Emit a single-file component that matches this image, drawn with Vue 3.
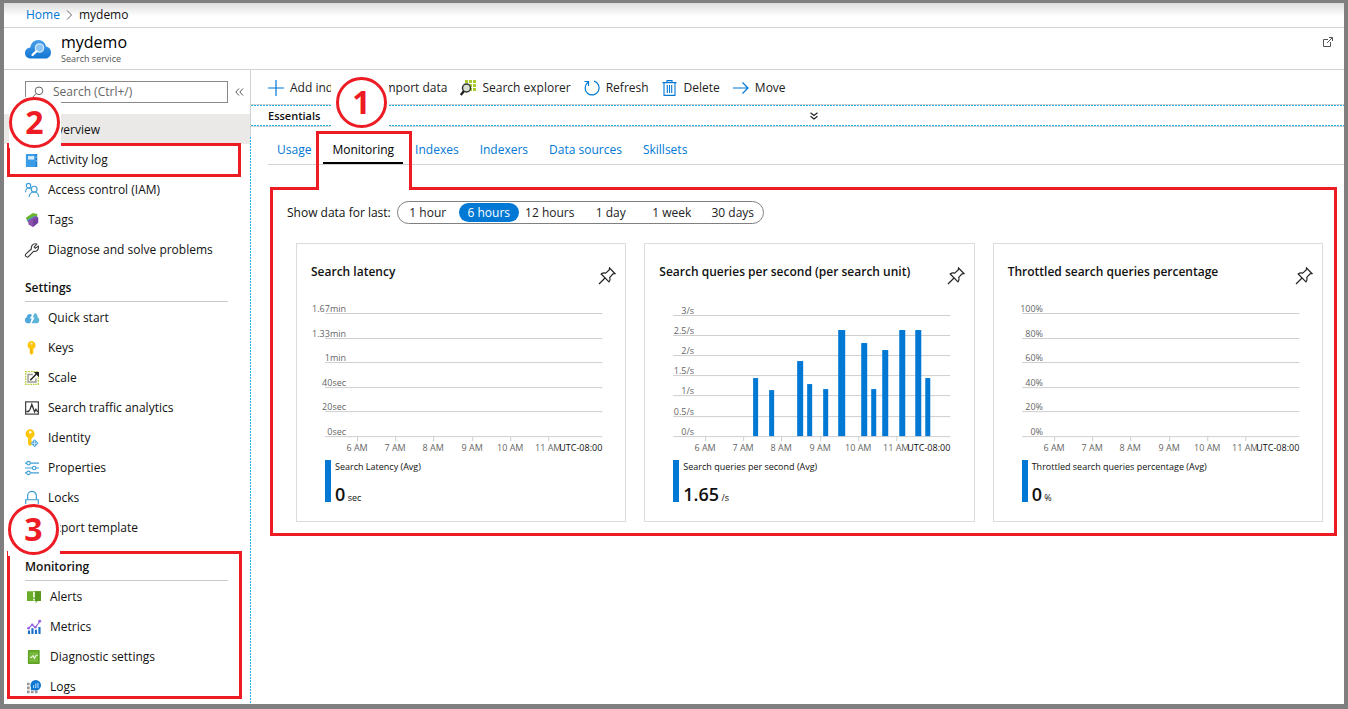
<script setup>
import { ref } from 'vue'

const icons = {
  overview: '<path d="M4 13a3.500 3.500 0 0 1 0-7 4.500 4.500 0 0 1 8.500 1A3 3 0 0 1 12 13z" fill="#2f8be0"/>',
  book: '<rect x="2" y="1" width="12" height="15" rx="1" fill="#1d7fd0"/><rect x="1" y="1" width="11" height="15" rx="1" fill="#3a9be6"/><rect x="3.500" y="3.500" width="7" height="4" fill="#d5ecfa"/><path d="M12.700 4v2M12.700 8v2" stroke="#9fd3f5"/>',
  people: '<g fill="none" stroke="#3f9fd8" stroke-width="1.300"><circle cx="4" cy="3" r="2.500"/><path d="M.6 10.500c.2-2.800 1.500-4.800 3.500-4.800 1 0 1.800.5 2.400 1.200"/><circle cx="10.500" cy="7" r="3.300"/><path d="M4.700 16c.3-3.200 2.200-5.700 5.700-5.700s5 2.700 5.300 5.700"/></g>',
  tags: '<path d="M1 5.500L9 0l5 1v3L3 10z" fill="#6bb52c"/><path d="M2 8l9-5 3 1v4l-9 4z" fill="#3ca2d9"/><path d="M3.500 8.500L12 3.500l3 1.500v6L9 16l-5-3z" fill="#8b52a8"/><path d="M9 7l6-2v6L9 16z" fill="#7440a0"/>',
  wrench: '<path d="M.8 12.800l6.500-6c-.5-3 1.200-6 4.300-6 1 0 1.500.1 2 .5L10.500 4.500l1.200 1.600 3.600-2.500c.6 4.100-2 6.600-5.500 5.900l-6 6.200c-1.800 1.100-4.300-1-3-2.900z" fill="none" stroke="#3b3b3b" stroke-width="1.300"/>',
  quick: '<path d="M3 14C-1 14-1 8 1.800 7.500 2.300 3.500 6 2.500 8 4.500L5.500 8.500h2.200L6 14z" fill="#4fa8dc"/><path d="M7.500 14L11 7.500H8.700L11 2.500c2.200 0 3.400 1.700 3.400 4.500 2.800.8 2.500 7-1 7z" fill="#5db4d9"/>',
  key: '<path d="M7.500 0a4.800 4.800 0 0 0-2 9V14L7.500 16l2-2V9a4.800 4.800 0 0 0-2-9z" fill="#fdc60b"/><circle cx="7.500" cy="2.800" r="1.200" fill="#fff3bd"/><path d="M6.800 9v5" stroke="#d99f00"/>',
  scale: '<rect x=".8" y=".8" width="14.400" height="14.400" fill="none" stroke="#b5cf38" stroke-width="1.500" stroke-dasharray="2 1"/><path d="M9 4H3.500v8.500h9V8.500" fill="none" stroke="#9a9a9a" stroke-width="1.600"/><path d="M6 10.500L13 3.500" stroke="#222" stroke-width="1.700"/><path d="M10 1h6v6z" fill="#222"/>',
  traffic: '<rect x=".7" y="1" width="14.600" height="14" fill="none" stroke="#444" stroke-width="1.400"/><path d="M1.500 12h2.500l1.800-2.500 2-5.500L11 12.500l1.500-3 2 3" fill="none" stroke="#333" stroke-width="1.500"/>',
  identity: '<path d="M6 -2a5.300 5.300 0 0 0-2.500 10V15L5.500 17l2.500-2-1-1.500 1-1.500-1-1.500 1-2.500A5.300 5.300 0 0 0 6-2z" fill="#fdc60b"/><circle cx="6" cy="1.500" r="1.400" fill="#fff"/><path d="M11 9.500l4.500 4.500L11 18.500 6.500 14z" fill="#4fa8dc"/><path d="M11 11v6M8 14h6" stroke="#d9effb"/>',
  sliders: '<g fill="none" stroke="#3f9fd8" stroke-width="1.300"><path d="M0 2.500h2M6 2.500h10M0 8h8.500M12.500 8H16M0 13.500h2M6 13.500h10"/><circle cx="4" cy="2.500" r="2"/><circle cx="10.500" cy="8" r="2"/><circle cx="4" cy="13.500" r="2"/></g>',
  lock: '<g fill="none" stroke="#3f9fd8" stroke-width="1.400"><path d="M3 10V5.500a5 5 0 0 1 10 0V10"/><path d="M.8 15.500V10h14.400v5.500"/></g>',
  template: '<rect x="2" y="2" width="12" height="12" fill="none" stroke="#3f9fd8"/>',
  alerts: '<path d="M0 1.500h16v11h-4l-2 3v-3H0z" fill="#6aad2b"/><path d="M8 1.500h8v11H9z" fill="#57961f"/><path d="M8 2v6.500M8 10v2" stroke="#fff" stroke-width="1.800"/>',
  metrics: '<path d="M1 12h2.500v4H1zM5 9.500h2.500V16H5zM9 11h2.500v5H9zM13 8h2.500v8H13z" fill="#1a73c8"/><path d="M1.500 9.500l4.500-4 3.500 3L14.500 2" fill="none" stroke="#8a5be0" stroke-width="1.200"/><g fill="#9b62e8"><circle cx="1.800" cy="9.300" r="1.500"/><circle cx="6" cy="5.500" r="1.500"/><circle cx="9.600" cy="8.300" r="1.500"/><circle cx="14.500" cy="1.500" r="1.700"/></g>',
  diagnostic: '<rect x="1" y="0" width="13.500" height="16" rx="1" fill="#5ea226"/><path d="M2.500 2h10v12h-10z" fill="#77b83b"/><path d="M3.500 8.500H5L7 6.500l1.500 3 2-3.500h2" fill="none" stroke="#e8f5dc" stroke-width="1.300"/>',
  logs: '<path d="M0 3h3v3H0zM0 7.500h3v3H0zM0 12h3v3H0zM4.500 12h3v3h-3zM9 12h3v3H9z" fill="#979797"/><circle cx="10" cy="6" r="6" fill="#0f77cf"/><path d="M4.500 6v5.500h5z" fill="#0f77cf"/><path d="M7.500 6v3M10 4v5M12.500 3v6" stroke="#a5d7fa" stroke-width="1.300"/>',
  plus: '<path d="M8 0v16M0 8h16" stroke="#0078d4" stroke-width="1.200"/>',
  import: '<path d="M8 1v14M3 10l5 5 5-5" fill="none" stroke="#0078d4"/>',
  explorer: '<path d="M5 0h3v3H5zM9 0h3v3H9zM13 0h3v3h-3zM9 4h3v3H9zM13 4h3v3h-3zM13 8h3v3h-3zM9 8h3v3H9z" fill="#a9cc2c"/><circle cx="6.500" cy="8" r="4" fill="#d9e0d2" stroke="#333" stroke-width="1.500"/><path d="M4 11L.8 15" stroke="#222" stroke-width="2.400"/>',
  refresh: '<path d="M10 1.200A7 7 0 1 1 4 2.300" fill="none" stroke="#0078d4" stroke-width="1.200"/><path d="M.5 1.500h4V6" fill="none" stroke="#0078d4" stroke-width="1.200"/>',
  trash: '<path d="M2 3v12.400h11V3M.5 2.600h14M5 2.500V.6h5v1.900M5.300 5v8M7.500 5v8M9.700 5v8" fill="none" stroke="#0078d4" stroke-width="1.100"/>',
  move: '<path d="M0 8h15.300M9.500 2.500L15 8l-5.500 5.500" fill="none" stroke="#0078d4" stroke-width="1.200"/>'
}

const general = [
  { icon: 'overview', label: 'Overview', current: true },
  { icon: 'book', label: 'Activity log', marked: true },
  { icon: 'people', label: 'Access control (IAM)' },
  { icon: 'tags', label: 'Tags' },
  { icon: 'wrench', label: 'Diagnose and solve problems' }
]
const settings = [
  { icon: 'quick', label: 'Quick start' },
  { icon: 'key', label: 'Keys' },
  { icon: 'scale', label: 'Scale' },
  { icon: 'traffic', label: 'Search traffic analytics' },
  { icon: 'identity', label: 'Identity' },
  { icon: 'sliders', label: 'Properties' },
  { icon: 'lock', label: 'Locks' },
  { icon: 'template', label: 'Export template' }
]
const monitoring = [
  { icon: 'alerts', label: 'Alerts' },
  { icon: 'metrics', label: 'Metrics' },
  { icon: 'diagnostic', label: 'Diagnostic settings' },
  { icon: 'logs', label: 'Logs' }
]
const commands = [
  { icon: 'plus', label: 'Add index' },
  { icon: 'import', label: 'Import data' },
  { icon: 'explorer', label: 'Search explorer' },
  { icon: 'refresh', label: 'Refresh' },
  { icon: 'trash', label: 'Delete' },
  { icon: 'move', label: 'Move' }
]
const tabs = ['Usage', 'Monitoring', 'Indexes', 'Indexers', 'Data sources', 'Skillsets']
const ranges = ['1 hour', '6 hours', '12 hours', '1 day', '1 week', '30 days']
const tab = ref('Monitoring')
const range = ref('6 hours')

const hours = ['6 AM', '7 AM', '8 AM', '9 AM', '10 AM', '11 AM']
const lines6 = [10, 35, 59, 84, 108, 133]
const lines7 = [12, 32, 52, 72, 92, 113, 133]
const charts = [
  {
    title: 'Search latency', series: 'Search Latency (Avg)', value: '0', unit: 'sec',
    rows: ['1.67min', '1.33min', '1min', '40sec', '20sec', '0sec'], lines: lines6, bars: []
  },
  {
    title: 'Search queries per second (per search unit)', series: 'Search queries per second (Avg)', value: '1.65', unit: '/s',
    rows: ['3/s', '2.5/s', '2/s', '1.5/s', '1/s', '0.5/s', '0/s'], lines: lines7,
    bars: [[108, 5, 58], [124, 5, 46], [152, 6, 75], [162, 5, 52], [178, 5, 47], [193, 7, 106], [216, 6, 93], [226, 5, 47], [237, 6, 86], [254, 6, 106], [270, 6, 106], [280, 5, 58]]
  },
  {
    title: 'Throttled search queries percentage', series: 'Throttled search queries percentage (Avg)', value: '0', unit: '%',
    rows: ['100%', '80%', '60%', '40%', '20%', '0%'], lines: lines6, bars: []
  }
]
</script>

<template>
  <div class="frame">
    <nav class="crumbs" aria-label="Breadcrumb">
      <a href="#">Home</a>
      <svg width="7" height="10" viewBox="0 0 7 10"><path d="M1 .5L5.500 5 1 9.500" fill="none" stroke="#666" /></svg>
      <span>mydemo</span>
    </nav>

    <header class="head">
      <svg class="logo" width="28" height="20" viewBox="0 0 28 20">
        <defs><linearGradient id="cloud" x1="0" y1="0" x2="0" y2="1"><stop offset="0" stop-color="#4ba0ea" /><stop offset="1" stop-color="#1276d2" /></linearGradient></defs>
        <path d="M7 19.500C3 19.500 1 17 1 14s2.300-5.200 5.300-5.400C7 4 10 1 14.200 1c4 0 7 2.500 7.800 6.500 3 .3 5 2.900 5 5.900 0 3.500-2.500 6.100-6 6.100z" fill="url(#cloud)" />
        <circle cx="15.500" cy="9" r="4.200" fill="#8cc6f5" stroke="#cfe8fc" stroke-width="1.200" />
        <path d="M12.500 12.200L8.500 16" stroke="#fff" stroke-width="2.300" stroke-linecap="round" />
      </svg>
      <div class="names">
        <h1>mydemo</h1>
        <p>Search service</p>
      </div>
      <button class="plain popout" aria-label="Open in new window">
        <svg width="10" height="10" viewBox="0 0 10 10" fill="none" stroke="#555"><path d="M5 2.500H.5v7h7V5M4 6l5-5M6 .5h3.500V4" /></svg>
      </button>
    </header>

    <div class="body">
      <aside class="side">
        <div class="find">
          <div class="box">
            <svg width="12" height="12" viewBox="0 0 12 12" fill="none" stroke="#666"><circle cx="7" cy="4.800" r="3.800" /><path d="M4.300 7.500L.8 11" /></svg>
            <input type="search" aria-label="Search" placeholder="Search (Ctrl+/)">
          </div>
          <button class="plain" aria-label="Collapse menu">
            <svg width="9" height="8" viewBox="0 0 9 8" fill="none" stroke="#555"><path d="M4 .5L.8 4 4 7.500M8 .5L4.800 4 8 7.500" /></svg>
          </button>
        </div>
        <nav class="menu">
          <a v-for="i in general" :key="i.label" href="#" class="item" :class="{ current: i.current, marked: i.marked }">
            <svg width="14" height="14" viewBox="0 0 16 16" v-html="icons[i.icon]"></svg>{{ i.label }}
          </a>
          <span class="badge two"><b>2</b></span>
        </nav>
        <h2>Settings</h2>
        <nav class="menu">
          <a v-for="i in settings" :key="i.label" href="#" class="item">
            <svg width="14" height="14" viewBox="0 0 16 16" v-html="icons[i.icon]"></svg>{{ i.label }}
          </a>
        </nav>
        <section class="group">
          <h2>Monitoring</h2>
          <nav class="menu inset">
            <a v-for="i in monitoring" :key="i.label" href="#" class="item">
              <svg width="14" height="14" viewBox="0 0 16 16" v-html="icons[i.icon]"></svg>{{ i.label }}
            </a>
          </nav>
          <span class="badge three"><b>3</b></span>
        </section>
      </aside>

      <main class="main">
        <div class="tools">
          <button v-for="c in commands" :key="c.label" class="plain tool">
            <svg width="16" height="16" viewBox="0 0 16 16" v-html="icons[c.icon]"></svg>{{ c.label }}
          </button>
          <span class="badge one"><b>1</b></span>
        </div>
        <button class="plain essentials">
          <strong>Essentials</strong>
          <svg width="8" height="8" viewBox="0 0 8 8" fill="none" stroke="#222" stroke-width="1.200"><path d="M.5.8L4 3.500 7.500.8M.5 4.300L4 7l3.500-2.700" /></svg>
        </button>
        <div class="tabs" role="tablist">
          <button v-for="t in tabs" :key="t" class="plain tab" :class="{ on: t === tab }" role="tab" :aria-selected="t === tab" @click="tab = t">{{ t }}</button>
        </div>

        <section class="panel">
          <div class="span-row">
            <span id="span-label">Show data for last:</span>
            <div class="pills" role="group" aria-labelledby="span-label">
              <button v-for="r in ranges" :key="r" class="plain pill" :class="{ on: r === range }" :aria-pressed="r === range" @click="range = r">{{ r }}</button>
            </div>
          </div>
          <div class="cards">
            <article v-for="c in charts" :key="c.title" class="card">
              <div class="card-head">
                <h3>{{ c.title }}</h3>
                <button class="plain" aria-label="Pin to dashboard">
                  <svg width="18" height="18" viewBox="0 0 18 18" fill="none" stroke="#222" stroke-width="1.200"><path d="M11.500 1l5.500 5.500-2 .3-3.200 3.500c.5 1.700.2 3.200-.8 4.500L3.200 7c1.300-1 2.800-1.300 4.500-.8L11.200 3zM7 11L1 17" /></svg>
                </button>
              </div>
              <svg class="plot" viewBox="0 0 328 152" role="img" :aria-label="c.title">
                <g class="grid">
                  <rect v-for="y in c.lines" :key="y" x="28" :y="y" width="277" height="1" />
                  <rect v-for="(h, n) in hours" :key="h" :x="60 + Math.round(n * 38.2)" y="133" width="1" height="5" />
                </g>
                <rect v-for="b in c.bars" :key="b[0]" class="bar" :x="b[0]" :y="133 - b[2]" :width="b[1]" :height="b[2]" />
                <text v-for="(r, n) in c.rows" :key="r" x="49" :y="c.lines[n] - 1" text-anchor="end">{{ r }}</text>
                <text v-for="(h, n) in hours" :key="h" :x="60 + Math.round(n * 38.2)" y="148" text-anchor="middle">{{ h }}</text>
                <text class="zone" x="305" y="148" text-anchor="end">UTC-08:00</text>
              </svg>
              <div class="legend">
                <p class="series">{{ c.series }}</p>
                <p class="value"><b>{{ c.value }}</b> {{ c.unit }}</p>
              </div>
            </article>
          </div>
        </section>
      </main>
    </div>
  </div>
</template>

<style>
body { margin: 0; }
</style>

<style scoped>
.frame {
  --red: #ed1c24;
  --rule: #d2d2d2;
  --blue: #0078d4;
  --dash: #1fb3e6;
  box-sizing: border-box;
  min-height: 100vh;
  display: flex;
  flex-direction: column;
  border: solid #807f7f;
  border-width: 3px 4px 5px;
  background: #fff;
  color: #111;
  font: 12px/16px "Open Sans", "Noto Sans", sans-serif;
}
h1, h2, h3, p { margin: 0; font-weight: 400; }
a { color: inherit; text-decoration: none; }
svg { display: block; flex: none; overflow: visible; }
.plain { margin: 0; padding: 0; border: 0; background: none; color: inherit; font: inherit; white-space: nowrap; cursor: pointer; }

.crumbs {
  display: flex;
  align-items: center;
  gap: 6px;
  height: 24px;
  padding-left: 22px;
  border-bottom: 1px solid var(--rule);
  background: linear-gradient(#dcdcdc, #fff 13px);
}
.crumbs a { color: var(--blue); }

.head {
  display: flex;
  align-items: center;
  height: 41px;
  padding: 0 11px 0 20px;
  border-bottom: 1px solid var(--rule);
}
.names { flex: 1; margin-left: 9px; }
.head h1 { font-size: 16px; line-height: 20px; color: #000; }
.head p { font-size: 9px; line-height: 13px; color: #555; }
.popout { margin-bottom: 13px; }

.body { display: flex; flex: 1; }
.side {
  position: relative;
  flex: none;
  width: 246px;
  border-right: 1px solid var(--rule);
}
.side::after {
  content: "";
  position: absolute;
  top: 67px;
  bottom: 0;
  right: -1px;
  width: 1px;
  background: repeating-linear-gradient(var(--dash) 0 2px, #fff 2px 3px);
}
.find { display: flex; align-items: center; gap: 7px; padding: 11px 0 11px 21px; }
.box {
  box-sizing: border-box;
  display: flex;
  align-items: center;
  gap: 9px;
  width: 203px;
  height: 22px;
  padding: 0 6px;
  border: 1px solid #8a8886;
}
.box input { flex: 1; min-width: 0; padding: 0; border: 0; outline: 0; background: none; font: inherit; }
.box input::placeholder { color: #666; opacity: 1; }

.menu { position: relative; }
.item {
  position: relative;
  box-sizing: border-box;
  display: flex;
  align-items: center;
  gap: 9px;
  height: 30px;
  padding: 2px 0 0 21px;
  white-space: nowrap;
}
.current { background: #ebe9e8; }
.marked::after {
  content: "";
  position: absolute;
  inset: -1px 9px -3px 3px;
  border: 3px solid var(--red);
}
.inset .item { padding-left: 23px; }
.side h2 {
  height: 37px;
  margin: 0 22px 0 21px;
  border-bottom: 1px solid #c8c8c8;
  font-size: 12px;
  font-weight: 600;
  line-height: 47px;
}
.group { position: relative; padding-top: 1px; }
.group::after {
  content: "";
  position: absolute;
  inset: 9px 8px 2px 3px;
  border: 3px solid var(--red);
  pointer-events: none;
}

.badge { position: absolute; z-index: 2; background: #fff; }
.badge b {
  display: block;
  box-sizing: border-box;
  width: 51px;
  height: 51px;
  border: 3px solid var(--red);
  border-radius: 50%;
  color: var(--red);
  font-size: 32px;
  font-weight: 700;
  line-height: 43px;
  text-align: center;
}
.one { top: 7px; left: 80px; padding: 0 2px 2px 5px; }
.two { top: -17px; left: 5px; padding-right: 1px; }
.three { top: -38px; left: 4px; padding: 0 1px 1px 0; }

.main { flex: 1; min-width: 0; }
.tools {
  position: relative;
  box-sizing: border-box;
  display: flex;
  align-items: center;
  gap: 13px;
  height: 34px;
  padding: 2px 0 0 17px;
  color: #222;
}
.tool { display: flex; align-items: center; gap: 6px; }
.essentials {
  position: relative;
  display: flex;
  align-items: center;
  width: 100%;
  height: 23px;
  padding: 0 0 0 17px;
  border: solid var(--rule);
  border-width: 1px 0;
}
.essentials::before, .essentials::after {
  content: "";
  position: absolute;
  left: 0;
  right: 0;
  height: 1px;
  background: repeating-linear-gradient(90deg, var(--dash) 0 2px, #fff 2px 3px);
}
.essentials::before { top: 0; }
.essentials::after { bottom: 0; }
.essentials strong { width: 50%; margin-right: 4px; text-align: left; font-weight: 600; font-size: 11px; }

.tabs { display: flex; gap: 3px; height: 37px; margin-left: 17px; border-bottom: 1px solid var(--rule); }
.tab { position: relative; padding: 8px 9px 0; color: var(--blue); }
.tab.on { color: #000; box-shadow: inset 0 -2px #000; }
.tab.on::after {
  content: "";
  position: absolute;
  z-index: 1;
  inset: 4px -9px -26px -7px;
  border: 3px solid var(--red);
  border-bottom: 0;
  pointer-events: none;
}
.tab.on::before {
  content: "";
  position: absolute;
  z-index: 1;
  inset: auto -6px -26px -4px;
  height: 4px;
  background: #fff;
}

.panel { margin: 22px 7px 0 19px; padding: 11px 11px 11px 23px; border: 3px solid var(--red); }
.span-row { display: flex; align-items: center; margin: 0 0 19px -9px; gap: 6px; }
.pills { display: flex; align-items: center; gap: 1px; height: 21px; border: 1px solid #808080; border-radius: 12px; }
.pill { width: 60px; height: 19px; border-radius: 10px; color: #222; }
.pill.on { background: var(--blue); color: #fff; }

.cards { display: grid; grid-template-columns: repeat(3, minmax(0, 1fr)); gap: 18px; }
.card { border: 1px solid #dcdcdc; padding-bottom: 19px; }
.card-head { display: flex; justify-content: space-between; height: 59px; padding: 0 9px 0 14px; }
.card-head h3 { padding-top: 20px; font-size: 12px; font-weight: 600; }
.card-head button { padding-top: 5px; }
.plot { width: 100%; height: auto; font-size: 9px; }
.plot text { fill: #666; }
.plot .zone { fill: #111; }
.grid { fill: #cfcfcf; }
.bar { fill: var(--blue); }
.legend { height: 42px; margin: 5px 0 0 28px; padding-left: 4px; border-left: 6px solid var(--blue); font-size: 9px; }
.series { line-height: 14px; }
.value { padding-top: 10px; line-height: 20px; }
.value b { font-size: 18px; font-weight: 600; }
</style>
